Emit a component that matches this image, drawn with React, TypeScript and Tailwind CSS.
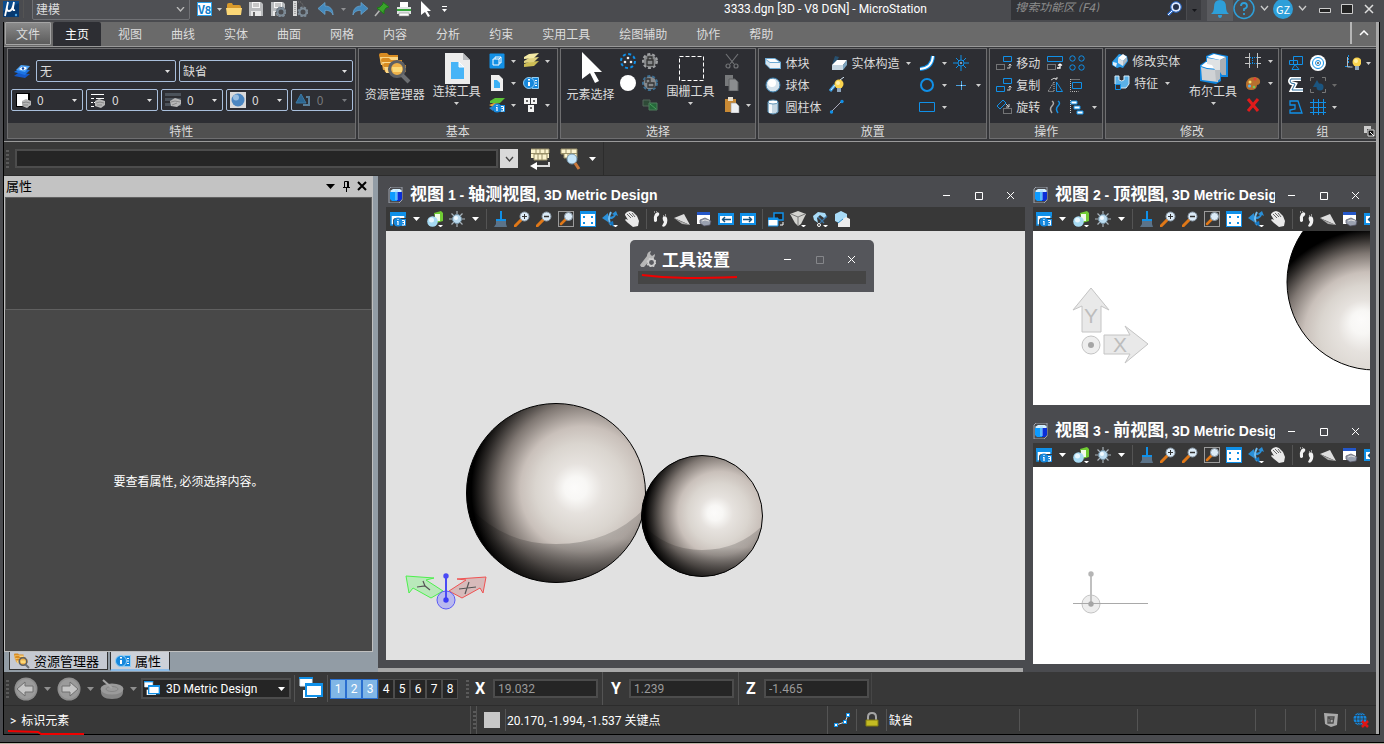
import React from "react";

type Drawing = React.ReactNode;

const B = "#1090e8";

const lens = (
  <>
    <path d="M1 15l6-6" stroke="#e07818" strokeWidth="3" strokeLinecap="round" />
    <circle cx="10.5" cy="5.5" r="4.5" fill="#dcebf7" stroke="#8b9aa8" />
  </>
);
const disk = (
  <>
    <path d="M1 1h12l2 2v12H1z" fill="#b9bbbd" />
    <path d="M4 1h8v6H4z" fill="#f5f5f5" />
    <path d="M5 3h6M5 5h6" stroke="#999" />
    <path d="M3 10h10v5H3z" fill="#e8e8e8" />
    <path d="M5 11h2v4H5z" fill="#666" />
  </>
);
const gear = (
  <>
    <circle cx="11" cy="11" r="3.5" fill="none" stroke="#7d8b97" strokeWidth="2" />
    <circle cx="11" cy="11" r="4.5" fill="none" stroke="#7d8b97" strokeWidth="2" strokeDasharray="2 1.6" />
  </>
);
const infoTag = (
  <>
    <circle cx="8" cy="11" r="4.5" fill="#1688dd" />
    <path d="M11 8h5v7h-5z" fill="#1688dd" />
    <path d="M8 10v4M7 10.5h1M8 8v1" stroke="#fff" strokeWidth="1.2" />
    <path d="M12 9.500h2.500v4.500h-2.500M12.500 11.500h2" stroke="#fff" fill="none" />
  </>
);
const bulb = (
  <>
    <circle cx="10" cy="7" r="4.500" fill="#fbd44e" />
    <circle cx="9" cy="6" r="2" fill="#fff0a8" />
    <path d="M8 11h4v4H8z" fill="#8fa6bd" />
  </>
);
const cluster = (c: string) => (
  <>
    <path d="M0 1h16v3H0zM0 6h16v3H0zM0 11h16v3H0z" fill={c} />
    <path d="M5 9l5-3 6 2v4l-4 3-6-1z" fill="#b7b7b7" />
    <path d="M6 10l4-1 5 1M7 13l5-2" stroke="#8b8b8b" />
  </>
);

const icons: Record<string, Drawing> = {
  logo: (
    <>
      <path d="M0 0h16v16H0z" fill="#0b4c8e" />
      <path d="M0 10L16 2v14H0z" fill="#083a70" />
      <path d="M5 1L2 15M5 1c-2 8-1 9 1 9s4-3 5-9c-1 6-2 9 1 8" fill="none" stroke="#fff" strokeWidth="1.800" />
      <circle cx="13" cy="14" r="1.200" fill="#4aa8e8" />
    </>
  ),
  folder: (
    <>
      <path d="M1 4q0-2 2-2h3l1 2h6q2 0 2 2v7q0 1-1 1H2q-1 0-1-1z" fill="#d99a2b" />
      <path d="M0 7h16l-1 7H1z" fill="#fbd777" />
    </>
  ),
  save: disk,
  saveGear: (
    <>
      {disk}
      <circle cx="11" cy="11" r="5" fill="#4b4c50" />
      {gear}
    </>
  ),
  compress: (
    <>
      <path d="M1 0h4v15H1z" fill="#d8d8d8" />
      <path d="M3 2v12M6 1h3l2 3v2" stroke="#777" fill="none" strokeDasharray="1 1" />
      {gear}
    </>
  ),
  undo: <path d="M0 7.500l7-6v3.500c5 0 8 3 8 9-1-3-4-5-8-4.500v4z" fill="#4389bd" stroke="#6fa9d2" strokeWidth=".7" />,
  redo: <path d="M16 7.500l-7-6v3.500c-5 0-8 3-8 9 1-3 4-5 8-4.500v4z" fill="#4389bd" stroke="#6fa9d2" strokeWidth=".7" />,
  pin: (
    <>
      <path d="M1 15l5-6" stroke="#b5b5b5" strokeWidth="1.500" />
      <path d="M9 1l6 5-3 1-2 3 0 3-7-6 3-1 3-3z" fill="#3aa32c" stroke="#1d7a17" />
    </>
  ),
  print: (
    <>
      <path d="M4 1h8v6H4z" fill="#fff" />
      <path d="M1 6h14v7H1z" fill="#dfe3e3" />
      <path d="M1 8h14v2H1z" fill="#35a53a" />
      <path d="M3 12h10v3H3z" fill="#fff" stroke="#888" strokeWidth=".6" />
    </>
  ),
  cursor: <path d="M3 0l10 10H9l3 5-2 1-3-5-4 3z" fill="#fff" />,
  searchLens: (
    <>
      <path d="M2 14l5-5" stroke="#2f6fd0" strokeWidth="3" />
      <path d="M2 14l5-5" stroke="#fff" strokeWidth="1" />
      <circle cx="10" cy="6" r="4" fill="#26324a" stroke="#dbe8ff" strokeWidth="2" />
      <circle cx="10" cy="6" r="5.300" fill="none" stroke="#2f6fd0" />
    </>
  ),
  level: (
    <>
      <path d="M0 13l4-3 12 1-5 4z" fill="#1458c8" />
      <path d="M0 9l5-3 11 1-5 5z" fill="#1c74e4" />
      <path d="M2 7l5-5 9 1-5 6z" fill="#4ca2f6" />
      <path d="M5 6q4-4 8-1-3 4-8 1" fill="#fff" />
      <circle cx="9" cy="5.500" r="1.200" fill="#0b3f9c" />
    </>
  ),
  color: (
    <>
      <path d="M1 1h14v14H1z" fill="#000" />
      <path d="M2 2h11v12H2z" fill="#fff" />
      <path d="M7 9l4-2 5 2v4l-4 3-5-2z" fill="#b7b7b7" />
      <path d="M7 11l4-1 4 1M8 13h5" stroke="#888" />
    </>
  ),
  lineStyle: (
    <>
      <path d="M1 2.500h13M1 6.500h3M6 6.500h8M1 10.500h2M4 10.500h2M1 14.500h3" stroke="#fff" />
      <path d="M5 9l4-2 6 2v4l-4 3-6-2z" fill="#b7b7b7" />
      <path d="M6 11l4-1 4 1M7 13h5" stroke="#888" />
    </>
  ),
  weight: cluster("#4c535b"),
  sphereTile: (
    <>
      <path d="M0 0h16v16H0z" fill="#d9d9d9" />
      <circle cx="8" cy="8" r="6.500" fill="#4b86c0" />
      <circle cx="6" cy="5.500" r="3" fill="#b9d6ee" opacity=".7" />
    </>
  ),
  priority: (
    <>
      <path d="M6 2l5 9H1z" fill="#2c6690" stroke="#3a79a6" />
      <path d="M8 13h6V5h-3" fill="none" stroke="#59809c" strokeWidth="2" />
    </>
  ),
  explorer: (
    <>
      <path d="M0 3q0-2 2-2h6l2 2h9v10H2z" fill="#d98c22" />
      <path d="M1 5h18v8H2z" fill="#fbd583" />
      <path d="M2 8q0-2 2-2h6l2 2h11v10H4z" fill="#d98c22" />
      <path d="M3 10h21v8H5z" fill="#fcdc92" />
      <path d="M4 13q0-2 2-2h5l2 2h14v7H6z" fill="#d98c22" />
      <path d="M5 15h22l-2 6H7z" fill="#fbd583" />
      <circle cx="18" cy="17" r="7.500" fill="#eeb24a" stroke="#5d6064" strokeWidth="3.200" />
      <path d="M13 15h10v5H14z" fill="#fbd978" />
      <path d="M23 23l7 7" stroke="#6c6f73" strokeWidth="4" />
    </>
  ),
  attach: (
    <>
      <path d="M4 1h18l7 7v24H4z" fill="#ececec" />
      <path d="M22 1v7h7z" fill="#b7b9bc" />
      <path d="M10 10h8l5 5v12H10z" fill="#47b4f7" />
      <path d="M18 10v5h5z" fill="#d9effd" stroke="#fff" />
    </>
  ),
  bigCursor: <path d="M7 0l20 20h-8l5 9-4 2-5-10-8 6z" fill="#fff" />,
  fence: <rect x="4.500" y="4.500" width="24" height="24" fill="none" stroke="#fff" strokeDasharray="4 2" />,
  boolean: (
    <>
      <path d="M3 13l6-4V4l7-3 15 3v21h-7v4l-5 3-16-3z" fill="#0e86e0" />
      <path d="M4 15l6 2 11 1v12L5 28z" fill="#cfd2d5" />
      <path d="M4 14l5-4h9l3 7-11-1z" fill="#fff" />
      <path d="M10 5l7-3 12 3-6 3z" fill="#fff" />
      <path d="M10 6l13 2v10h-5l-3-5-5-1z" fill="#dfe2e4" />
      <path d="M23 8l6-3v18h-4l-2-3z" fill="#a9afb5" />
      <path d="M18 18h5v9l-4 3z" fill="#b9bec3" />
    </>
  ),
  cube: (
    <>
      <rect width="15" height="15" x=".5" y=".5" rx="1" fill="#1290e6" />
      <path d="M4 6h6v6H4zM6 6V4h6v6h-2M10 6l2-2" fill="none" stroke="#fff" />
    </>
  ),
  slabs: (
    <>
      <path d="M1 11l5-2 10-1-5 5-10 1z" fill="#cdbd55" />
      <path d="M1 8l5-3 10-1-5 5-10 1z" fill="#e0d380" />
      <path d="M1 4l5-3 10-1-5 5-10 1z" fill="#f4eaa6" />
    </>
  ),
  refDoc: (
    <>
      <path d="M2 0h8l4 4v12H2z" fill="#eee" />
      <path d="M5 5h3l3 3v5H5z" fill="#3bb0f5" />
    </>
  ),
  info: (
    <>
      <path d="M9 2.500h6.500v11H9z" fill="#1688dd" stroke="#8fcdf5" />
      <path d="M12 5.500h2M12 8h2M12 10.500h2" stroke="#fff" />
      <circle cx="6" cy="8" r="5.500" fill="#1688dd" stroke="#8fcdf5" />
      <path d="M6 7v4M6 4v1.500" stroke="#fff" strokeWidth="2" />
    </>
  ),
  levelInfo: (
    <>
      <path d="M1 4l5-3h10l-5 5H1z" fill="#5bc236" />
      <path d="M0 8l5-2 6 1-5 4z" fill="#e1a53b" />
      <path d="M0 11l4-2v5z" fill="#2f85c9" />
      {infoTag}
    </>
  ),
  cells: (
    <>
      <path d="M1 1h6v6H1zM8 1h6v6H8zM5 8h6v7H5z" fill="#f3f3f3" />
      <path d="M3 3h2v2H3zM10 3h2v2h-2zM7 10h2v2H7z" fill="#666" />
    </>
  ),
  ringDots: (
    <>
      <circle cx="8" cy="8" r="7" fill="none" stroke={B} strokeWidth="2" strokeDasharray="3 2.500" />
      <circle cx="8" cy="5" r="1.300" fill="#eee" />
      <circle cx="5" cy="9" r="1.300" fill="#eee" />
      <circle cx="11" cy="9" r="1.300" fill="#eee" />
    </>
  ),
  whiteDot: <circle cx="8" cy="8" r="8" fill="#fff" />,
  lockGray: (
    <>
      <circle cx="8" cy="8" r="6.500" fill="#87898b" />
      <circle cx="8" cy="8" r="7" fill="none" stroke="#a0a2a4" strokeWidth="2" strokeDasharray="3 2" />
      <path d="M5 7h6v5H5zM6 7V4h4v3" fill="none" stroke="#333" strokeWidth="1.300" />
    </>
  ),
  unlockGray: (
    <>
      <circle cx="8" cy="8" r="6.500" fill="#87898b" />
      <circle cx="8" cy="8" r="7" fill="none" stroke="#3e7195" strokeWidth="2" strokeDasharray="3 2" />
      <path d="M6 8h6v4H6zM4 8V4h4v3" fill="none" stroke="#333" strokeWidth="1.300" />
    </>
  ),
  greenStack: (
    <>
      <path d="M1 3h7v6H1z" fill="#2e4a37" stroke="#53675a" />
      <path d="M7 6h8v7H7z" fill="#25683a" stroke="#4e7c5c" />
      <path d="M8 7l6 5" stroke="#49a05e" />
    </>
  ),
  cut: (
    <>
      <path d="M2 1l8 10M14 1L6 11" stroke="#717376" strokeWidth="1.200" />
      <circle cx="4" cy="13" r="2" fill="none" stroke="#717376" strokeWidth="1.200" />
      <circle cx="12" cy="13" r="2" fill="none" stroke="#717376" strokeWidth="1.200" />
    </>
  ),
  copy: (
    <>
      <path d="M1 0h8v11H1z" fill="#77797b" />
      <path d="M5 4h6l3 3v9H5z" fill="#8b8d8f" stroke="#5f6163" />
    </>
  ),
  paste: (
    <>
      <path d="M1 2h11v13H1z" fill="#c98a35" />
      <path d="M4 0h5v4H4z" fill="#e8e0d0" />
      <path d="M7 6h5l3 3v7H7z" fill="#eef0f2" stroke="#999" strokeWidth=".6" />
    </>
  ),
  block: (
    <>
      <path d="M0 3h10l6 4v7H5L0 9z" fill="#6fabd4" />
      <path d="M1 4h9l4 3H5z" fill="#fff" />
      <path d="M1 5l4 3v5L1 9z" fill="#d5e4ee" />
      <path d="M5 8h10v5H5z" fill="#eef3f7" />
    </>
  ),
  ball: (
    <>
      <circle cx="8" cy="8" r="7" fill="#d4e2ec" stroke="#3a7fae" />
      <circle cx="7" cy="6" r="4" fill="#fff" />
    </>
  ),
  cylinder: (
    <>
      <path d="M3 3v10q5 4 10 0V3z" fill="#c5d7e3" stroke="#5c92b6" />
      <path d="M4 4h3v10H4z" fill="#f5f9fc" />
      <ellipse cx="8" cy="3" rx="5" ry="2" fill="#fff" stroke="#5c92b6" />
    </>
  ),
  solid: (
    <>
      <path d="M4 1l4 1-3 6-4 2z" fill="#27506f" />
      <path d="M1 10l5-5h10l-4 5z" fill="#fff" />
      <path d="M1 10h11v5H1z" fill="#c6d6e1" />
      <path d="M12 10l4-5v5l-4 5z" fill="#7da5c0" />
    </>
  ),
  bulbPen: (
    <>
      <path d="M1 14l5-6" stroke="#3ea0e4" strokeWidth="3" />
      <path d="M2 13l4-5M11 3l4-3" stroke="#dfefff" />
      {bulb}
    </>
  ),
  line: (
    <>
      <path d="M2 13L13 2" stroke="#aab" />
      <circle cx="2.500" cy="13" r="1.700" fill={B} />
      <circle cx="13" cy="2.500" r="1.700" fill={B} />
    </>
  ),
  arc: (
    <>
      <path d="M1 14q12-1 13-13" fill="none" stroke={B} strokeWidth="4" />
      <path d="M1 14q12-1 13-13" fill="none" stroke="#fff" strokeWidth="2" />
    </>
  ),
  sun: (
    <>
      <path d="M8 0v16M0 8h16M3 3l10 10M13 3L3 13" stroke={B} />
      <circle cx="8" cy="8" r="3" fill="#2d2e33" stroke={B} />
      <circle cx="8" cy="8" r="1" fill="#9bd" />
    </>
  ),
  circle: <circle cx="8" cy="8" r="6" fill="none" stroke={B} strokeWidth="2" />,
  plus: (
    <>
      <path d="M3 8.500h10M8.500 4v9" stroke="#4ba0dd" />
      <path d="M8 8h1v1H8z" fill="#fff" />
    </>
  ),
  rect: <path d="M.500 3.500h15v9H.500z" fill="none" stroke={B} />,
  move: (
    <>
      <path d="M7.500 1.500h8v5h-8z" fill="none" stroke={B} />
      <path d="M.500 9.500h8v5h-8z" fill="none" stroke="#bbb" strokeDasharray="1 1" />
      <path d="M11 13h3V9M12.500 10.500L14 9l1.500 1.500" stroke="#ccc" fill="none" />
    </>
  ),
  copyEl: (
    <>
      <path d="M7.500 1.500h8v5h-8zM.500 9.500h8v5h-8z" fill="none" stroke={B} />
      <path d="M11 13h3V9M12.500 10.500L14 9l1.500 1.500" stroke="#ccc" fill="none" />
    </>
  ),
  rotateEl: (
    <>
      <path d="M1 7l6-6 3 3-6 6z" fill="none" stroke={B} />
      <path d="M7.500 9.500h8v5h-8z" fill="none" stroke="#bbb" strokeDasharray="1 1" />
      <path d="M10 5l3 3M13 5v3h-3" stroke="#ccc" />
    </>
  ),
  scale: (
    <>
      <path d="M.500 1.500h15v5H.500z" fill="none" stroke={B} />
      <path d="M.500 9.500h8v5h-8z" fill="none" stroke="#bbb" strokeDasharray="1 1" />
      <path d="M10 13h3V9M11 10.500L13 9l2 1.500" stroke="#fff" fill="none" strokeWidth="1.300" />
    </>
  ),
  mirror: (
    <>
      <path d="M9.500 5v9.500h6z" fill="none" stroke={B} />
      <path d="M7 5v9.500H1z" fill="none" stroke="#bbb" strokeDasharray="1 1" />
      <path d="M4 3q3-3 6-1M10 0v2H8" stroke="#ccc" fill="none" />
    </>
  ),
  curves: (
    <>
      <path d="M5 2q3 2 0 5t0 7" fill="none" stroke="#aaa" strokeWidth="1.500" />
      <path d="M11 2q3 2 0 5t0 7" fill="none" stroke={B} strokeWidth="1.500" />
    </>
  ),
  array: (
    <g fill="none" stroke={B}>
      <circle cx="3.500" cy="3.500" r="2.700" />
      <circle cx="12.500" cy="3.500" r="2.700" />
      <circle cx="3.500" cy="12.500" r="2.700" />
      <circle cx="12.500" cy="12.500" r="2.700" />
    </g>
  ),
  align: (
    <>
      <path d="M1.500 2v12.500h8M1.500 2.500h10" fill="none" stroke="#bbb" strokeDasharray="1 1" />
      <path d="M3.500 5.500h9v6h-9z" fill="none" stroke={B} />
    </>
  ),
  stackEl: (
    <>
      <path d="M1.500 1v14" stroke="#ccc" strokeDasharray="1 1" />
      <path d="M2 2h6v3H2zM5 7h6v3H5zM8 12h6v3H8z" fill="#fff" stroke={B} />
    </>
  ),
  modSolid: (
    <>
      <path d="M0 9l7-8 8 2 1 5-5 7-3-1-3 1-5-3z" fill="#2a9be8" />
      <path d="M6 5l5-4 4 3-4 4z" fill="#fff" />
      <path d="M6 5l5 3v5l-5-3z" fill="#dbe1e6" />
      <path d="M11 8l4-4v4l-4 5z" fill="#aeb9c2" />
      <path d="M1 9l4 1-1 4-3-2z" fill="#dff0fb" />
    </>
  ),
  feature: (
    <>
      <path d="M1 1h4v4q3 2 5 0V1h5v8l-3 4H5L1 9z" fill="#5bb2e9" stroke="#d7ecfa" />
      <path d="M1.500 9.500h5v5h-5z" fill="#2d2e33" stroke={B} />
    </>
  ),
  trim: (
    <>
      <path d="M4.500 0v15M12.500 0v15M0 4.500h4M13 4.500h3M0 10.500h4M13 10.500h3" stroke="#c5c5c5" />
      <path d="M5 4.500h7M5 10.500h7M7.500 5v5" stroke={B} strokeDasharray="1 1" />
    </>
  ),
  palette: (
    <>
      <path d="M1 10q0-8 9-8 6 1 5 6-1 2-3 2 0 5-6 5-5 0-5-5z" fill="#b8702e" />
      <circle cx="5" cy="7" r="1.500" fill="#f3df6f" />
      <circle cx="10" cy="4" r="1.500" fill="#e43c3c" />
      <circle cx="4.500" cy="11" r="1.500" fill="#59b3ef" />
      <circle cx="9" cy="12" r="1.300" fill="#77cc55" />
    </>
  ),
  del: <path d="M3 2l10 12M13 2L3 14" stroke="#e01b1b" strokeWidth="3" />,
  g1: <path d="M5.500 1.500h9v8h-9zM1.500 5.500h8v4h-8zM4 14.500l3-5 4 5z" fill="none" stroke={B} />,
  target: (
    <>
      <circle cx="8" cy="8" r="8" fill="#fff" />
      <circle cx="8" cy="8" r="5.500" fill="none" stroke={B} />
      <circle cx="8" cy="8" r="2.500" fill="none" stroke={B} />
      <circle cx="8" cy="8" r="1" fill="#555" />
    </>
  ),
  g2: (
    <>
      <path d="M13 2H3q-2 2 0 4l4 1-3 6h11" fill="none" stroke="#fff" strokeWidth="4" />
      <path d="M13 2H3q-2 2 0 4l4 1-3 6h11" fill="none" stroke="#2a6c9c" />
    </>
  ),
  g3: <path d="M2 2h8l4 12H2v-3l5-1V6H2z" fill="none" stroke={B} strokeWidth="1.300" />,
  hash: <path d="M3.500 0v16M8.500 0v16M13.500 0v16M0 3.500h16M0 8.500h16M0 13.500h16" stroke={B} />,
  shapes: (
    <>
      <path d="M.500 4V.500H4M12 .500h3.500V4M15.500 12v3.500H12M4 15.500H.500V12" stroke="#777" fill="none" />
      <path d="M7 3l4 7H3z" fill="#1b5580" />
      <circle cx="10" cy="10" r="3.500" fill="#1b5580" />
    </>
  ),
  snapBulb: (
    <>
      <path d="M3.500 0v8M0 11.500h6" stroke={B} strokeDasharray="2 1" />
      <path d="M2.500 2v10h5" stroke="#bbb" fill="none" />
      <g transform="translate(2 0)">{bulb}</g>
    </>
  ),
  launcher: (
    <>
      <path d="M1 1h7v3H4v4H1z" fill="#ccc" />
      <path d="M5 5h6v6H5z" fill="#111" stroke="#ddd" />
      <path d="M7 7l4 4" stroke="#fff" />
    </>
  ),
  keys: (
    <>
      <path d="M1 1h18v9H1z" fill="#fbf3ce" />
      <path d="M1 5.500h18M6 1v5M10 1v5M15 1v5M8 6v4M13 6v4M1 1h18v4" stroke="#988f68" fill="none" />
      <path d="M4 6h13v6H4z" fill="#fbf3ce" stroke="#988f68" />
      <path d="M8 6v6M12 6v6" stroke="#988f68" />
      <path d="M19 14v4H5" fill="none" stroke="#ddd" strokeWidth="2" />
      <path d="M0 18l7-4v8z" fill="#fff" />
    </>
  ),
  keysFind: (
    <>
      <path d="M1 1h16v9H4V6H1z" fill="#fbf3ce" stroke="#988f68" />
      <path d="M1 5.500h16M6 1v5M11 1v5M8 6v4M13 6v4" stroke="#988f68" />
      <circle cx="12" cy="11" r="5" fill="#c5e6fa" stroke="#7595ab" />
      <path d="M15 15l4 6" stroke="#c9783b" strokeWidth="3" />
    </>
  ),
  viewCube: (
    <>
      <path d="M1 2l2-2h11v13l-3 3H1z" fill="#4a4b4f" stroke="#9da3ad" />
      <path d="M2 4l3-2h7l2 2-1 1H3z" fill="#d5f0ff" />
      <path d="M2 5h7v9H4l-2-2z" fill="#0d9bff" />
      <path d="M9 5h5v7l-2 2H9z" fill="#0a2fd8" />
      <path d="M7 3h3v10H7z" fill="#9fdcff" opacity=".5" />
    </>
  ),
  viewAttr: (
    <>
      <path d="M1 2h14v12H1z" fill="#fff" stroke={B} strokeWidth="1.500" />
      <path d="M0 1h16v4H0z" fill={B} />
      <path d="M3 16V10q0-3 3-3h10v9z" fill="#383838" />
      {infoTag}
    </>
  ),
  display: (
    <>
      <path d="M7 2l7-2 2 2v8l-7 2z" fill="#70cc33" />
      <path d="M8 3h5v7H8z" fill="#f1fbe9" />
      <circle cx="5.500" cy="10.500" r="5.300" fill="#a6daf3" />
      <circle cx="4.500" cy="9" r="2.500" fill="#e8f7fe" />
      <path d="M11 14h5l-2.500 2.500z" fill="#fff" />
    </>
  ),
  bright: (
    <>
      <path d="M8 0v16M0 8h16M2.500 2.500l11 11M13.500 2.500l-11 11" stroke="#a9b3ba" strokeWidth="1.200" />
      <circle cx="8" cy="8" r="4.500" fill="#bcdcf0" stroke="#7390a2" />
      <circle cx="7" cy="7" r="2" fill="#f3fbff" />
    </>
  ),
  brush: (
    <>
      <path d="M8 0h2v8h4v3H4V8h4z" fill={B} />
      <path d="M4 10h10v3l1 3H2l2-3z" fill="#5b7389" />
    </>
  ),
  zoomIn: (
    <>
      {lens}
      <path d="M8 5.500h5M10.500 3v5" stroke="#333" />
    </>
  ),
  zoomOut: (
    <>
      {lens}
      <path d="M8 5.500h5" stroke="#333" strokeWidth="1.500" />
    </>
  ),
  zoomWin: (
    <>
      <path d="M.500 .500h15v15H.500z" fill="none" stroke="#fff" strokeDasharray="1 1" />
      <path d="M3 13l5-5" stroke="#e07818" strokeWidth="2.500" strokeLinecap="round" />
      <circle cx="10.500" cy="5.500" r="4" fill="#dcebf7" stroke="#8b9aa8" />
    </>
  ),
  fit: (
    <>
      <path d="M0 0h16v16H0z" fill={B} />
      <path d="M1 3h14v12H1z" fill="#fff" />
      <path d="M3 5h2v2H3zM11 5h2v2h-2zM3 11h2v2H3zM11 11h2v2h-2z" fill={B} />
    </>
  ),
  rotView: (
    <>
      <path d="M0 7l6-5v3q4 2 6-1l-2-1 4-3 2 5-2-1q-2 5-8 4v3z" fill="#2a8fd8" />
      <path d="M9 1q-4 7 0 13" stroke="#72bdf0" strokeWidth="2" fill="none" />
      <path d="M6 12l6 4-1-6z" fill="#1478c4" />
      <path d="M11 14h5l-2.500 2.500z" fill="#fff" />
    </>
  ),
  pan: (
    <>
      <path d="M1 3l2-2 3-1 3 1 4 4 2 5-1 5-5 1-5-4-3-3 1-1 2 1-3-5z" fill="#e9e9e9" />
      <path d="M3 3l4 4M5 2l4 4M8 2l3 4" stroke="#666" />
    </>
  ),
  walk: (
    <>
      <path d="M3 3q2-3 4-1 1 2-2 4l0 4q-2 2-3 0-1-4 1-7z" fill="#f2f2f2" />
      <path d="M11 6q3-2 4 1 1 4-1 7-2 3-4 1l2-4q-2-3-1-5z" fill="#f2f2f2" />
      <path d="M2 1h1M4 0h1M11 5h1M13 4h1" stroke="#f2f2f2" />
    </>
  ),
  fly: (
    <>
      <path d="M0 7l10-4 6 11z" fill="#ddd" />
      <path d="M0 7l6 3 10 4-8-1z" fill="#aaa" />
    </>
  ),
  camera: (
    <>
      <path d="M1 1h13v12H1z" fill="#fff" />
      <path d="M1 1h13v3H1z" fill="#2457c9" />
      <path d="M4 9l5-2 6 3-1 4-6 1-4-3z" fill="#9aa1b0" stroke="#556" strokeWidth=".7" />
      <path d="M6 10l3-1 4 1" stroke="#ddd" />
    </>
  ),
  prevView: (
    <>
      <path d="M1 3h14v10H1z" fill="#fff" stroke={B} strokeWidth="2" />
      <path d="M4 8.500h9M7 6L4.500 8.500 7 11" stroke="#14527f" strokeWidth="1.400" fill="none" />
      <path d="M0 2h16v3H0z" fill={B} />
    </>
  ),
  nextView: (
    <>
      <path d="M1 3h14v10H1z" fill="#fff" stroke={B} strokeWidth="2" />
      <path d="M3 8.500h9M9 6l2.500 2.500L9 11" stroke="#14527f" strokeWidth="1.400" fill="none" />
      <path d="M0 2h16v3H0z" fill={B} />
    </>
  ),
  copyView: (
    <>
      <path d="M6 2h9v7H6z" fill="#222" stroke={B} strokeWidth="1.500" />
      <path d="M0 7h10v8H0z" fill="#fff" stroke={B} />
      <path d="M0 7h10v2H0z" fill={B} />
      <path d="M12 14h3v-3" stroke="#fff" fill="none" />
    </>
  ),
  clipVol: (
    <>
      <path d="M0 3l8-3 8 3-5 10-3 2-3-3z" fill="#d3d3cf" />
      <path d="M1 3l7 3 7-3M8 6v9" stroke="#777" fill="none" />
      <path d="M11 14h5l-2.500 2.500z" fill="#fff" />
    </>
  ),
  clipMask: (
    <>
      <path d="M1 5l5-4 7 1 2 4-3 1-4-3-3 3 1 5-4-3z" fill="#a9dcf8" />
      <path d="M6 6l6 6M15 5l-7 7" stroke="#3c78a8" strokeWidth="1.300" />
      <circle cx="7" cy="14" r="1.500" fill="none" stroke="#fff" />
      <path d="M11 14h5l-2.500 2.500z" fill="#fff" />
    </>
  ),
  clipSolid: (
    <>
      <path d="M1 3l6-3 6 3v7l-6 3-6-3z" fill="#a9dcf8" />
      <path d="M4 12l5-4 3-2 4 2v8H4z" fill="#ececec" />
      <path d="M4 12l5-4" stroke="#2b8bc9" />
    </>
  ),
  wrench: (
    <>
      <path d="M0 14l7-9q0-4 4-5l-1 3 2 2 3-2q0 5-4 5l-7 8q-3 1-4-2z" fill="#b7b7b7" />
      <circle cx="11.500" cy="11.500" r="3.300" fill="#5a5b60" stroke="#cfcfcf" strokeWidth="1.700" />
      <circle cx="11.500" cy="11.500" r="4.300" fill="none" stroke="#cfcfcf" strokeWidth="1.200" strokeDasharray="1.700 1.700" />
    </>
  ),
  windows: (
    <>
      <path d="M1 1h12v8H1z" fill="#fff" stroke="#dff0fc" />
      <path d="M0 0h14v2H0z" fill={B} />
      <path d="M4 13h14v8H4z" fill="#fff" />
      <path d="M7 7h16v12H7z" fill="#fff" stroke={B} strokeWidth="2" />
      <path d="M6 6h18v3H6z" fill={B} />
    </>
  ),
  back: (
    <>
      <circle cx="12" cy="12" r="11.500" fill="#8e8e8e" />
      <circle cx="12" cy="12" r="10" fill="#9b9b9b" />
      <path d="M3 12l8-7v4h8v6h-8v4z" fill="#c6c6c6" stroke="#707070" />
    </>
  ),
  fwd: (
    <>
      <circle cx="12" cy="12" r="11.500" fill="#8e8e8e" />
      <circle cx="12" cy="12" r="10" fill="#9b9b9b" />
      <path d="M21 12l-8-7v4H5v6h8v4z" fill="#c6c6c6" stroke="#707070" />
    </>
  ),
  dish: (
    <>
      <path d="M1 13q-1 9 11 9t11-9l-1-2H2z" fill="#858585" />
      <ellipse cx="12" cy="12" rx="11.500" ry="5.500" fill="#9a9a9a" />
      <ellipse cx="12" cy="12" rx="6" ry="2.500" fill="none" stroke="#858585" />
      <path d="M3 3l9 8" stroke="#a5a5a5" strokeWidth="2" />
    </>
  ),
  snap: (
    <>
      <path d="M2 13l9-3 3-7" stroke="#ddd" fill="none" />
      <path d="M0 11h4v4H0zM9 8h4v4H9zM12 1h4v4h-4z" fill={B} />
      <path d="M1 12h2v2H1zM10 9h2v2h-2zM13 2h2v2h-2z" fill="#fff" />
    </>
  ),
  lock: (
    <>
      <path d="M4 8V5q0-4 4-4t4 4v3" fill="none" stroke="#a5a5a5" strokeWidth="2" />
      <path d="M2 8h12v6H2z" fill="#c4bb22" stroke="#817a12" />
    </>
  ),
  shield: (
    <>
      <path d="M1 1l14 1-1 11-6 2-6-3z" fill="#a9a9a9" />
      <path d="M5 5h6l-1 6H5zM5 5l2 2v4M7 7h4" fill="none" stroke="#4b4b4b" strokeWidth="1.300" />
    </>
  ),
  globe: (
    <>
      <circle cx="7" cy="7" r="6.500" fill="#1588de" />
      <path d="M0 7h14M7 0v14M1 3.500h12M1 10.500h12" stroke="#333" strokeWidth=".7" />
      <ellipse cx="7" cy="7" rx="3.500" ry="6.500" fill="none" stroke="#333" strokeWidth=".7" />
      <path d="M9 9l6 6M15 9l-6 6" stroke="#e01515" strokeWidth="2.500" />
    </>
  ),
};

function Icon({ n, s = 16, box = s }: { n: string; s?: number; box?: number }) {
  return (
    <svg width={s} height={s} viewBox={`0 0 ${box} ${box}`} className="shrink-0" fill="none" aria-hidden="true">
      {icons[n]}
    </svg>
  );
}

function Tri({ w = 5, c = "#cfcfcf" }: { w?: number; c?: string }) {
  return (
    <svg width={w} height={Math.ceil(w / 2)} viewBox="0 0 10 6" preserveAspectRatio="none" className="shrink-0" aria-hidden="true">
      <path d="M0 0h10L5 6z" fill={c} />
    </svg>
  );
}

function IconBtn({ n, label }: { n?: string; label?: string }) {
  if (!n) return <span className="h-[22px]" />;
  return (
    <button aria-label={label ?? n} className="flex h-[22px] min-w-0 items-center justify-center">
      <Icon n={n} />
    </button>
  );
}

function Drop({ off, dim }: { off?: boolean; dim?: boolean }) {
  if (off) return <span className="h-[22px]" />;
  return (
    <button aria-label="更多" className="flex h-[22px] items-center justify-center">
      <Tri c={dim ? "#6b6b6b" : "#cfcfcf"} />
    </button>
  );
}

function Group({ title, className, bodyClass = "", launcher, children }: { title: string; className: string; bodyClass?: string; launcher?: boolean; children: React.ReactNode }) {
  return (
    <section className={`flex flex-col border border-[#6e6e70] bg-[#2d2e33] ${className}`}>
      <div className={`flex h-[74px] ${bodyClass}`}>{children}</div>
      <div className="flex h-[15px] items-center justify-center bg-[#505050]">
        <h3 className={launcher ? "flex-1 text-center" : ""}>{title}</h3>
        {launcher && (
          <button aria-label="组设置" className="pr-px">
            <Icon n="launcher" s={12} />
          </button>
        )}
      </div>
    </section>
  );
}

function BigBtn({ n, label, drop, className }: { n: string; label: string; drop?: boolean; className: string }) {
  return (
    <button className={`flex flex-col items-center whitespace-nowrap pt-[2px] leading-[14px] ${drop ? "" : "gap-[3px]"} ${className}`}>
      <Icon n={n} s={32} />
      <span>{label}</span>
      {drop && (
        <span className="pt-1">
          <Tri />
        </span>
      )}
    </button>
  );
}

function TextBtn({ n, label, drop, className = "pl-[6px]" }: { n: string; label?: string; drop?: boolean; className?: string }) {
  return (
    <button aria-label={label ?? n} className={`flex h-[22px] items-center gap-1 whitespace-nowrap ${className}`}>
      <Icon n={n} />
      {label && <span>{label}</span>}
      {drop && (
        <span className="pl-[3px]">
          <Tri />
        </span>
      )}
    </button>
  );
}

function Pick({ icon, value, label, className, dim }: { icon?: string; value: string; label: string; className: string; dim?: boolean }) {
  return (
    <label className={`relative flex h-[22px] items-center rounded-[2px] border border-[#a9bfdc] pl-[3px] ${className}`}>
      {icon && <Icon n={icon} />}
      <select aria-label={label} className={`min-w-0 flex-1 appearance-none bg-transparent outline-none ${icon ? "pl-[6px]" : ""} ${dim ? "text-[#77797d]" : ""}`}>
        <option>{value}</option>
      </select>
      <span className="pointer-events-none absolute right-[5px]">
        <Tri c={dim ? "#77797d" : "#e0e0e0"} />
      </span>
    </label>
  );
}

const Sep = ({ className = "" }: { className?: string }) => <span className={`w-px shrink-0 self-stretch bg-[#545454] ${className}`} />;

const Grip = () => (
  <svg width="3" height="20" className="shrink-0" aria-hidden="true">
    <path d="M1.500 1v18" stroke="#5a5a5a" strokeWidth="3" strokeDasharray="2 2" />
  </svg>
);

function WinControls({ name, dimMax }: { name: string; dimMax?: boolean }) {
  return (
    <div className="-mr-px flex h-full shrink-0">
      <button aria-label={`最小化 ${name}`} className="flex w-8 items-center justify-center">
        <svg width="9" height="9">
          <path d="M1 4.500h7" stroke="#fff" />
        </svg>
      </button>
      <button aria-label={`最大化 ${name}`} className="flex w-8 items-center justify-center">
        <svg width="9" height="9">
          <path d="M1.500 1.500h7v7h-7z" fill="none" stroke={dimMax ? "#85868a" : "#fff"} />
        </svg>
      </button>
      <button aria-label={`关闭 ${name}`} className="flex w-8 items-center justify-center">
        <svg width="9" height="9">
          <path d="M1 1l7 7M8 1L1 8" stroke="#fff" />
        </svg>
      </button>
    </div>
  );
}

const viewTools = ["viewAttr", "v", "display", "bright", "v", "|", "brush", "zoomIn", "zoomOut", "zoomWin", "fit", "rotView", "pan", "|", "walk", "fly", "camera", "prevView", "nextView", "|", "copyView", "clipVol", "clipMask", "clipSolid"];

function View({ no, name, className, canvasClass, compact, children }: { no: number; name: string; className: string; canvasClass: string; compact?: boolean; children: React.ReactNode }) {
  return (
    <article className={`flex min-h-0 min-w-0 flex-col ${className}`}>
      <header className={`flex h-[27px] shrink-0 items-center pt-[3px] ${compact ? "" : "pl-[2px]"}`}>
        <Icon n="viewCube" />
        <h2 className="ml-[6px] min-w-0 flex-1 overflow-hidden whitespace-nowrap font-['Liberation_Sans','Noto_Sans_CJK_SC',sans-serif] text-[14px] font-bold leading-[24px] text-white">
          <span className="text-[17px]">视图</span> {no} - <span className="text-[17px]">{name}</span>, 3D Metric Design
        </h2>
        <WinControls name={`视图 ${no}`} />
      </header>
      <div className={`flex h-6 shrink-0 items-center overflow-hidden bg-[#383838] ${compact ? "" : "pl-px"}`}>
        {viewTools.map((t, i) =>
          t === "|" ? (
            <span key={i} className="flex h-5 w-[6px] shrink-0 justify-center">
              <Sep />
            </span>
          ) : t === "v" ? (
            <button key={i} aria-label="更多" className="flex h-full w-[15px] shrink-0 items-center justify-center">
              <Tri w={7} c="#fff" />
            </button>
          ) : (
            <button key={i} aria-label={t} className="flex h-full w-[22px] shrink-0 items-center justify-center">
              <Icon n={t} />
            </button>
          ),
        )}
      </div>
      <div className={`relative min-h-0 flex-1 overflow-hidden ${canvasClass}`}>{children}</div>
    </article>
  );
}

const shade = (
  <>
    <stop offset="0" stopColor="#fcfbfa" />
    <stop offset=".09" stopColor="#f8f7f5" />
    <stop offset=".2" stopColor="#e6e2de" />
    <stop offset=".36" stopColor="#dad5cf" />
    <stop offset=".5" stopColor="#c9c0ba" />
    <stop offset=".7" stopColor="#7f7772" />
    <stop offset=".86" stopColor="#2e2b29" />
    <stop offset=".96" stopColor="#000" />
  </>
);

function IsoScene() {
  return (
    <svg width="639" height="429" viewBox="0 0 639 429" className="absolute left-0 top-0">
      <defs>
        <radialGradient id="big" gradientUnits="userSpaceOnUse" cx="206" cy="259" r="125" fx="188" fy="257">
          {shade}
        </radialGradient>
        <radialGradient id="small" gradientUnits="userSpaceOnUse" cx="340" cy="283" r="84" fx="328" fy="282">
          {shade}
        </radialGradient>
        <clipPath id="bigClip">
          <circle cx="170" cy="262" r="89.500" />
        </clipPath>
        <clipPath id="smallClip">
          <circle cx="316" cy="285" r="60.500" />
        </clipPath>
        <linearGradient id="lower" x1="0" y1="0" x2="0" y2="1">
          <stop offset=".45" stopColor="#000" stopOpacity=".16" />
          <stop offset="1" stopColor="#000" stopOpacity=".6" />
        </linearGradient>
      </defs>
      <circle cx="170" cy="262" r="89.500" fill="url(#big)" />
      <path clipPath="url(#bigClip)" d="M80 272Q115 313 170 313T260 276V352H80z" fill="url(#lower)" />
      <circle cx="170" cy="262" r="89.500" fill="none" stroke="#000" />
      <circle cx="316" cy="285" r="60.500" fill="url(#small)" />
      <path clipPath="url(#smallClip)" d="M255 292Q280 319 316 319T377 294V346H255z" fill="url(#lower)" />
      <circle cx="316" cy="285" r="60.500" fill="none" stroke="#000" />
      <path d="M20 345l28 2-8 2 17 11-12 7-18-10-4 5z" fill="#a8ecaa" fillOpacity=".7" stroke="#4df04d" />
      <path d="M100 346l-3 16-3-5-18 10-13-7 17-11-9-1z" fill="#d0a0a0" fillOpacity=".6" stroke="#f05252" />
      <path d="M31 356l8-1 5 4M39 355l-2-5M73 358l17-2M79 363l4-12" fill="none" stroke="#555" strokeWidth="1.200" />
      <circle cx="60" cy="369" r="9" fill="#b9b9ee" stroke="#5a5af5" />
      <path d="M60 345v24" stroke="#4a4af5" strokeWidth="2" />
      <circle cx="60" cy="345" r="2.700" fill="#4a4af5" />
      <circle cx="60" cy="369" r="2.700" fill="#3a3af5" />
    </svg>
  );
}

function TopScene() {
  return (
    <svg width="337" height="174" viewBox="0 0 337 174" className="absolute left-0 top-0">
      <defs>
        <radialGradient id="top" gradientUnits="userSpaceOnUse" cx="344" cy="124" r="130" fx="328" fy="88">
          {shade}
        </radialGradient>
      </defs>
      <circle cx="342" cy="51" r="88" fill="url(#top)" stroke="#000" />
      <path d="M58 57l18 22-8-4v26H49V75l-9 4zM115 113L92 95l5 9H71v19h26l-5 9z" fill="#e9e9e9" stroke="#c4c4c4" />
      <circle cx="58" cy="114" r="9" fill="#eee" stroke="#c4c4c4" />
      <circle cx="58" cy="114" r="3" fill="#a5a5a5" />
      <g fill="#bdbdbd" fontFamily="Liberation Sans, sans-serif" fontSize="21" textAnchor="middle">
        <text x="58" y="92">Y</text>
        <text x="87" y="121">X</text>
      </g>
    </svg>
  );
}

function FrontScene() {
  return (
    <svg width="337" height="197" viewBox="0 0 337 197" className="absolute left-0 top-0">
      <circle cx="58" cy="137" r="9" fill="#ededed" stroke="#c4c4c4" />
      <path d="M40 136.500h75" stroke="#a9a9a9" />
      <path d="M58 107v30" stroke="#c0c0c0" strokeWidth="2" />
      <circle cx="58" cy="107" r="2.700" fill="#b5b5b5" />
      <circle cx="58" cy="137" r="2.700" fill="#a5a5a5" />
    </svg>
  );
}

const tabs = ["视图", "曲线", "实体", "曲面", "网格", "内容", "分析", "约束", "实用工具", "绘图辅助", "协作", "帮助"];

function TitleBar() {
  return (
    <header className="flex h-[22px] shrink-0 items-start overflow-hidden">
      <div className="flex h-[18px] items-center">
        <span className="ml-[3px]">
          <Icon n="logo" />
        </span>
        <Sep className="mx-1" />
        <label className="relative ml-1 flex h-[22px] w-[158px] items-center rounded-[2px] border border-[#707175] bg-[#4f5054]">
          <select aria-label="工作流" className="w-full appearance-none bg-transparent pl-[3px] outline-none">
            <option>建模</option>
          </select>
          <svg width="9" height="5" className="pointer-events-none absolute right-1">
            <path d="M1 0l3.500 4L8 0" fill="none" stroke="#bbb" strokeWidth="1.300" />
          </svg>
        </label>
        <button className="ml-[7px] h-[14px] w-[15px] border border-[#2ba0ea] bg-white text-[11px] font-bold leading-[12px] text-[#0f7cc9]">V8</button>
        <button aria-label="V8 选项" className="flex w-[14px] justify-center">
          <Tri />
        </button>
        <div className="flex items-center gap-[6px]">
          {["folder", "save", "saveGear", "compress", "undo"].map((n) => (
            <button key={n} aria-label={n} className="last:ml-1">
              <Icon n={n} />
            </button>
          ))}
        </div>
        <button aria-label="撤销列表" className="flex w-[18px] justify-center">
          <Tri c="#8f9093" />
        </button>
        <div className="flex items-center gap-[6px]">
          {["redo", "pin", "print", "cursor"].map((n) => (
            <button key={n} aria-label={n}>
              <Icon n={n} />
            </button>
          ))}
        </div>
        <button aria-label="自定义快速访问" className="ml-1 flex w-3 flex-col items-center gap-[2px]">
          <span className="h-px w-[5px] bg-white" />
          <Tri c="#fff" />
        </button>
      </div>
      <h1 className="ml-auto mr-[84px] whitespace-nowrap font-['Roboto','Noto_Sans_CJK_SC',sans-serif] text-[12px] leading-[18px] text-white">3333.dgn [3D - V8 DGN] - MicroStation</h1>
      <div className="flex h-5 w-[175px] items-start bg-[#333438] pl-1">
        <input aria-label="搜索功能区" placeholder="搜索功能区 (F4)" className="h-3 min-w-0 flex-1 bg-transparent text-[12px] italic leading-[12px] outline-none placeholder:text-[#8d8d8d]" />
        <button aria-label="搜索" className="mr-1 mt-px">
          <Icon n="searchLens" />
        </button>
      </div>
      <button aria-label="搜索选项" className="ml-px flex h-5 w-[14px] items-center justify-center bg-[#3c3d41]">
        <Tri c="#15161a" />
      </button>
      <button aria-label="通知" className="ml-[6px] flex h-[21px] w-[26px] justify-center bg-[#5a5b5f]">
        <svg width="22" height="18">
          <path d="M2 14q3-2 3-7 0-7 6-7t6 7q0 5 3 7zM9 15h4q0 3-2 3t-2-3z" fill="#2e9fd9" />
        </svg>
      </button>
      <button aria-label="帮助" className="flex h-5 w-[22px] justify-center">
        <svg width="22" height="20">
          <circle cx="11" cy="8.500" r="10" fill="none" stroke="#2e9fd9" strokeWidth="1.500" />
          <path d="M8 6q0-3 3-3t3 3q0 2-3 3v2M11 13v2" fill="none" stroke="#2e9fd9" strokeWidth="1.800" />
        </svg>
      </button>
      {["帮助菜单", "账户菜单"].map((l, i) => (
        <React.Fragment key={l}>
          {i === 1 && <button className="-mt-px h-5 w-5 rounded-full bg-[#2e9fd9] text-[11px] leading-[18px] text-white">GZ</button>}
          <button aria-label={l} className="flex h-4 w-[18px] items-center justify-center">
            <svg width="9" height="6">
              <path d="M1 1l3.500 4L8 1" fill="none" stroke="#ccc" strokeWidth="1.300" />
            </svg>
          </button>
        </React.Fragment>
      ))}
      <div className="ml-2 mr-[9px] flex h-[17px] items-center gap-[10px]">
        <button aria-label="最小化">
          <svg width="12" height="12">
            <path d="M.500 5.500h11v4H.500z" fill="#222" stroke="#ccc" />
          </svg>
        </button>
        <button aria-label="还原">
          <svg width="12" height="12">
            <path d="M.500 1.500h11v9H.500z" fill="#222" stroke="#ccc" />
          </svg>
        </button>
        <button aria-label="关闭">
          <svg width="12" height="12">
            <path d="M2 2l8 8M10 2l-8 8" stroke="#ddd" strokeWidth="1.500" />
          </svg>
        </button>
      </div>
    </header>
  );
}

function Ribbon() {
  return (
    <div className="flex h-[95px] shrink-0 gap-[2px] border-b border-[#9a9a9a] bg-[#36373a] pb-[2px] pl-[3px] pt-px">
      <Group title="特性" className="w-[349px]" bodyClass="flex-col gap-[7px] pl-[3px] pr-[2px] pt-[11px]">
        <div className="flex items-center gap-[3px]">
          <span className="flex w-[22px] justify-center">
            <Icon n="level" />
          </span>
          <Pick value="无" label="模板" className="w-[140px]" />
          <Pick value="缺省" label="图层" className="min-w-0 flex-1" />
        </div>
        <div className="flex gap-[3px]">
          <Pick icon="color" value="0" label="颜色" className="w-[72px]" />
          <Pick icon="lineStyle" value="0" label="线型" className="w-[72px]" />
          <Pick icon="weight" value="0" label="线宽" className="min-w-0 flex-1" />
          <Pick icon="sphereTile" value="0" label="透明度" className="min-w-0 flex-1" />
          <Pick icon="priority" value="0" label="优先级" className="min-w-0 flex-1" dim />
        </div>
      </Group>
      <Group title="基本" className="w-[200px]" bodyClass="pl-px pt-px">
        <BigBtn n="explorer" label="资源管理器" className="w-[70px]" />
        <BigBtn n="attach" label="连接工具" drop className="mr-[2px] w-[54px]" />
        <div className="grid grid-cols-[22px_12px_22px_12px] content-start">
          <IconBtn n="cube" />
          <Drop />
          <IconBtn n="slabs" />
          <Drop />
          <IconBtn n="refDoc" />
          <Drop />
          <IconBtn n="info" />
          <Drop off />
          <IconBtn n="levelInfo" />
          <Drop />
          <IconBtn n="cells" />
          <Drop />
        </div>
      </Group>
      <Group title="选择" className="w-[197px]" bodyClass="pl-1 pt-px">
        <BigBtn n="bigCursor" label="元素选择" className="w-[52px]" />
        <div className="grid grid-cols-[22px_22px] content-start">
          <IconBtn n="ringDots" />
          <IconBtn n="lockGray" />
          <IconBtn n="whiteDot" />
          <IconBtn n="unlockGray" />
          <IconBtn />
          <IconBtn n="greenStack" />
        </div>
        <BigBtn n="fence" label="围栅工具" drop className="w-[60px]" />
        <div className="grid grid-cols-[22px_12px] content-start">
          <IconBtn n="cut" />
          <Drop off />
          <IconBtn n="copy" />
          <Drop off />
          <IconBtn n="paste" />
          <Drop />
        </div>
      </Group>
      <Group title="放置" className="w-[229px]" bodyClass="pt-[3px]">
        <div className="w-[68px]">
          <TextBtn n="block" label="体块" />
          <TextBtn n="ball" label="球体" />
          <TextBtn n="cylinder" label="圆柱体" />
        </div>
        <div className="w-[89px]">
          <TextBtn n="solid" label="实体构造" drop className="pl-1" />
          <TextBtn n="bulbPen" className="pl-[2px]" />
          <TextBtn n="line" className="pl-[2px]" />
        </div>
        <div className="grid grid-cols-[22px_12px_22px_12px] content-start">
          <IconBtn n="arc" />
          <Drop />
          <IconBtn n="sun" />
          <Drop off />
          <IconBtn n="circle" />
          <Drop />
          <IconBtn n="plus" />
          <Drop />
          <IconBtn n="rect" />
          <Drop />
        </div>
      </Group>
      <Group title="操作" className="w-[114px]" bodyClass="pt-[3px]">
        <div className="w-[54px]">
          <TextBtn n="move" label="移动" />
          <TextBtn n="copyEl" label="复制" />
          <TextBtn n="rotateEl" label="旋转" />
        </div>
        <div className="grid grid-cols-[22px_22px_12px] content-start">
          <IconBtn n="scale" />
          <IconBtn n="array" />
          <Drop off />
          <IconBtn n="mirror" />
          <IconBtn n="align" />
          <Drop off />
          <IconBtn n="curves" />
          <IconBtn n="stackEl" />
          <Drop />
        </div>
      </Group>
      <Group title="修改" className="w-[174px]" bodyClass="pt-px">
        <div className="w-[78px]">
          <TextBtn n="modSolid" label="修改实体" />
          <TextBtn n="feature" label="特征" drop className="pl-2" />
        </div>
        <BigBtn n="boolean" label="布尔工具" drop className="w-[58px]" />
        <div className="grid grid-cols-[22px_12px] content-start">
          <IconBtn n="trim" />
          <Drop />
          <IconBtn n="palette" />
          <Drop />
          <IconBtn n="del" label="删除" />
          <Drop off />
        </div>
      </Group>
      <Group title="组" className="min-w-[95px] flex-1 border-r-0" bodyClass="pl-[3px] pt-[3px]" launcher>
        <div className="grid grid-cols-[22px_22px_12px_24px_8px] content-start">
          <IconBtn n="g1" />
          <IconBtn n="target" />
          <Drop off />
          <IconBtn n="snapBulb" />
          <Drop />
          <IconBtn n="g2" />
          <IconBtn n="shapes" />
          <Drop dim />
          <Drop off />
          <Drop off />
          <IconBtn n="g3" />
          <IconBtn n="hash" />
          <Drop />
        </div>
      </Group>
    </div>
  );
}

function PropertiesPanel() {
  return (
    <aside className="flex w-[374px] shrink-0 flex-col bg-[#929ca5] pr-[5px]">
      <div className="flex h-5 shrink-0 items-center bg-[#c3c3c3] pl-[2px] pr-[3px] text-black">
        <h2 className="flex-1 text-[13px]">属性</h2>
        <button aria-label="面板菜单" className="flex w-4 justify-center">
          <Tri w={9} c="#000" />
        </button>
        <button aria-label="固定" className="flex w-4 justify-center">
          <svg width="9" height="12">
            <path d="M2.500 7V1.500h4V7M5.500 2v5M1 7.500h7M4.500 8v4" stroke="#000" fill="none" />
          </svg>
        </button>
        <button aria-label="关闭面板" className="flex w-4 justify-center">
          <svg width="10" height="10">
            <path d="M1 1l8 8M9 1L1 9" stroke="#000" strokeWidth="2" />
          </svg>
        </button>
      </div>
      <div className="flex min-h-0 flex-1 flex-col border border-[#c0c0c0] bg-[#484848]">
        <div className="h-[113px] shrink-0 border border-[#606060] bg-[#3d3d3d]" />
        <p className="flex flex-1 items-center justify-center text-white">要查看属性, 必须选择内容。</p>
      </div>
      <div className="flex h-5 shrink-0 items-start gap-[2px] pl-[5px] text-[13px] leading-[16px] text-black">
        <button className="flex h-[18px] items-center gap-1 border border-t-0 border-[#333] bg-[#c6cad2] pl-1 pr-2">
          <Icon n="explorer" box={32} />
          <span>资源管理器</span>
        </button>
        <button className="flex h-[19px] items-center gap-1 border border-b-2 border-t-0 border-[#333] border-b-[#8cbce8] bg-[#cdd1d8] pl-1 pr-2">
          <Icon n="info" />
          <span>属性</span>
        </button>
      </div>
    </aside>
  );
}

function ToolSettings() {
  return (
    <div role="dialog" aria-label="工具设置" className="absolute left-[244px] top-[9px] h-[52px] w-[244px] rounded-t-[5px] bg-[#55565b] px-2">
      <div className="flex h-[31px] items-center pl-[2px] pt-[7px]">
        <Icon n="wrench" />
        <h2 className="ml-[6px] flex-1 text-[17px] font-bold leading-[20px] text-white">工具设置</h2>
        <WinControls name="工具设置" dimMax />
      </div>
      <div className="h-[13px] bg-[#454545]" />
      <svg width="98" height="8" className="absolute left-[11px] top-[33px]" aria-hidden="true">
        <path d="M1 2q22 3 45 3t50-1" fill="none" stroke="#f00000" strokeWidth="2" />
      </svg>
    </div>
  );
}

function Coord({ axis, value, className = "" }: { axis: string; value: string; className?: string }) {
  return (
    <label className={`flex items-center ${className}`}>
      <span className="w-[18px] text-[16px] font-bold text-white">{axis}</span>
      <input defaultValue={value} className="h-[19px] w-[105px] border-2 border-[#4c4c4c] bg-[#252525] px-[3px] text-[12px] text-[#9a9a9a] outline-none" />
    </label>
  );
}

function BottomBar() {
  return (
    <div className="flex h-[34px] shrink-0 items-center border-b border-[#2c2c2c] bg-[#383838] pl-[2px] font-['Roboto','Noto_Sans_CJK_SC',sans-serif]">
      <Grip />
      <div className="ml-[5px] flex items-center">
        {["back", "fwd", "dish"].map((n) => (
          <React.Fragment key={n}>
            <button aria-label={n}>
              <Icon n={n} s={24} />
            </button>
            <button aria-label={`${n} 列表`} className="flex w-[19px] justify-center">
              <Tri w={7} c="#8f8f8f" />
            </button>
          </React.Fragment>
        ))}
      </div>
      <label className="relative -ml-[2px] flex h-[21px] w-[150px] items-center border-2 border-[#4c4c4c] bg-[#252525] pl-px text-white">
        <Icon n="windows" box={24} />
        <select aria-label="视图组" className="min-w-0 flex-1 appearance-none bg-transparent pl-[6px] outline-none">
          <option>3D Metric Design</option>
        </select>
        <span className="pointer-events-none absolute right-1">
          <Tri w={7} c="#fff" />
        </span>
      </label>
      <Sep className="my-[3px] ml-[3px] mr-1" />
      <button aria-label="管理视图组">
        <Icon n="windows" s={24} />
      </button>
      <Sep className="my-[3px] ml-1 mr-[2px]" />
      <div className="flex bg-black">
        {[1, 2, 3, 4, 5, 6, 7, 8].map((v) => (
          <button key={v} className={`h-5 w-4 border leading-[18px] text-white ${v < 4 ? "border-[#2a6fd0] bg-[#80b6e6]" : "border-[#4c4c4c] bg-[#252525]"}`}>
            {v}
          </button>
        ))}
      </div>
      <span className="ml-2 mr-[3px]">
        <Grip />
      </span>
      <Coord axis="X" value="19.032" className="pl-[3px]" />
      <Sep className="ml-1 mr-2" />
      <Coord axis="Y" value="1.239" />
      <Sep className="ml-1 mr-[7px]" />
      <Coord axis="Z" value="-1.465" />
      <Sep className="my-[1px] ml-[2px] opacity-50" />
    </div>
  );
}

function StatusBar() {
  return (
    <div className="relative flex h-[28px] shrink-0 items-center bg-[#383838] font-['Roboto','Noto_Sans_CJK_SC',sans-serif] text-white">
      <p className="flex w-[466px] items-center gap-[5px] pl-[6px] pt-px">
        <span>&gt;</span>
        <span>标识元素</span>
      </p>
      <svg width="76" height="8" className="absolute -bottom-[3px] left-[4px] z-10" aria-hidden="true">
        <path d="M0 2l30 1 3 2h43" fill="none" stroke="#f00000" strokeWidth="2" />
      </svg>
      <Sep className="mr-[2px]" />
      <Grip />
      <Sep className="mr-[7px]" />
      <span className="h-4 w-4 bg-[#c8c8c8]" />
      <Sep className="my-[3px] ml-[5px] mr-px" />
      <p className="w-[320px] whitespace-nowrap pt-px">20.170, -1.994, -1.537 关键点</p>
      <Sep />
      <button aria-label="精确捕捉" className="flex w-[28px] justify-center">
        <Icon n="snap" />
      </button>
      <Sep className="my-[3px]" />
      <button aria-label="锁定" className="flex w-[29px] justify-center">
        <Icon n="lock" />
      </button>
      <Sep className="my-[3px]" />
      <p className="flex-1 pl-[2px] pt-px">缺省</p>
      <Sep className="my-[3px] mr-[117px]" />
      <Sep className="my-[3px] mr-[117px]" />
      <Sep className="my-[3px] mr-[29px]" />
      <Sep className="my-[3px] mr-[29px]" />
      <Sep className="my-[3px]" />
      <button aria-label="数字权限" className="flex w-[29px] justify-center">
        <Icon n="shield" />
      </button>
      <Sep className="my-[3px]" />
      <button aria-label="连接状态" className="flex w-[30px] justify-center">
        <Icon n="globe" />
      </button>
    </div>
  );
}

export default function App() {
  return (
    <main className="flex h-screen min-h-[600px] w-full flex-col overflow-hidden bg-[#4a4b4f] font-['Noto_Sans_CJK_SC',sans-serif] text-[12px] leading-[16px] text-[#dcdcdc]">
      <TitleBar />
      <div className="ml-[3px] mr-1 flex min-h-0 flex-1 border-x border-b border-black">
        <div className="flex min-h-0 min-w-0 flex-1 flex-col border-r-[3px] border-[#a8a8a8]">
          <nav className="flex h-[25px] shrink-0 items-end border-b border-[#999] bg-[#6a6a6a] pl-px">
            <button className="mr-[2px] h-[23px] w-[46px] self-start rounded-[1px] border border-[#a5a5a5] bg-gradient-to-b from-[#8a8a8a] to-[#5c5c5c]">文件</button>
            <button className="mr-[5px] h-[24px] rounded-t-[2px] bg-[#2d2e33] px-3 text-white">主页</button>
            {tabs.map((t) => (
              <button key={t} className="mr-[5px] h-[24px] px-3">
                {t}
              </button>
            ))}
            <button aria-label="折叠功能区" className="ml-auto flex h-[22px] w-[26px] items-center justify-center self-start border-l-2 border-[#b5b5b5]">
              <svg width="10" height="6">
                <path d="M1 5l4-4 4 4" fill="none" stroke="#fff" strokeWidth="1.500" />
              </svg>
            </button>
          </nav>
          <Ribbon />
          <div className="flex h-[34px] shrink-0 items-center border-b border-[#2c2c2c] bg-[#383838]">
            <div className="flex h-full w-[600px] items-center border-r border-[#2c2c2c] pl-[2px]">
              <Grip />
              <input aria-label="键入命令" className="ml-[6px] h-[19px] w-[483px] border-2 border-[#4c4c4c] bg-[#252525] px-1 outline-none" />
              <button aria-label="键入历史" className="ml-[2px] flex h-[19px] w-[18px] items-center justify-center bg-[#d9d9d9]">
                <svg width="9" height="6">
                  <path d="M1 1l3.500 4L8 1" fill="none" stroke="#444" strokeWidth="1.300" />
                </svg>
              </button>
              <button aria-label="运行键入" className="ml-3">
                <Icon n="keys" s={22} />
              </button>
              <button aria-label="浏览键入" className="ml-2">
                <Icon n="keysFind" s={22} />
              </button>
              <button aria-label="更多键入" className="ml-[7px]">
                <Tri w={7} c="#fff" />
              </button>
            </div>
          </div>
          <div className="flex min-h-0 flex-1">
            <PropertiesPanel />
            <div className="flex min-h-0 min-w-0 flex-1 bg-[#4a4b4f] pr-[6px]">
              <div className="flex min-h-0 min-w-0 flex-1 flex-col pt-1">
                <View no={1} name="轴测视图" className="mb-2 ml-2 flex-1" canvasClass="bg-[#e1e1e1]">
                  <IsoScene />
                  <ToolSettings />
                </View>
                <div className="mr-[2px] h-1 shrink-0 bg-[#a8a8a8]" />
              </div>
              <div className="ml-2 flex w-[337px] shrink-0 flex-col gap-[11px] pb-2 pt-1">
                <View no={2} name="顶视图" compact className="flex-[225]" canvasClass="bg-white">
                  <TopScene />
                </View>
                <View no={3} name="前视图" compact className="flex-[248]" canvasClass="bg-white">
                  <FrontScene />
                </View>
              </div>
            </div>
          </div>
          <BottomBar />
          <StatusBar />
        </div>
      </div>
      <div className="h-[9px] shrink-0 border-b border-[#b9b2a4]">
        <div className="h-2 border-b border-black" />
      </div>
    </main>
  );
}
